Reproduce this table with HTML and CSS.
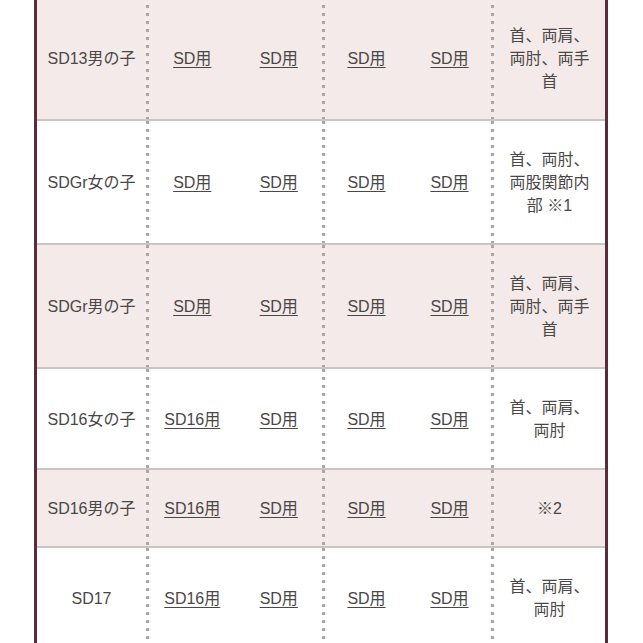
FILE: index.html
```html
<!DOCTYPE html>
<html lang="ja">
<head>
<meta charset="utf-8">
<title>SD table</title>
<link rel="stylesheet" href="styles.css">
</head>
<body>
<div class="table">
  <div class="row pink">
    <div class="cell name">SD13男の子</div>
    <div class="dots"></div>
    <div class="cell"><a href="#">SD用</a></div>
    <div class="cell"><a href="#">SD用</a></div>
    <div class="dots"></div>
    <div class="cell"><a href="#">SD用</a></div>
    <div class="cell"><a href="#">SD用</a></div>
    <div class="dots"></div>
    <div class="cell note">首、両肩、両肘、両手首</div>
  </div>
  <div class="row">
    <div class="cell name">SDGr女の子</div>
    <div class="dots"></div>
    <div class="cell"><a href="#">SD用</a></div>
    <div class="cell"><a href="#">SD用</a></div>
    <div class="dots"></div>
    <div class="cell"><a href="#">SD用</a></div>
    <div class="cell"><a href="#">SD用</a></div>
    <div class="dots"></div>
    <div class="cell note">首、両肘、両股関節内部 ※1</div>
  </div>
  <div class="row pink">
    <div class="cell name">SDGr男の子</div>
    <div class="dots"></div>
    <div class="cell"><a href="#">SD用</a></div>
    <div class="cell"><a href="#">SD用</a></div>
    <div class="dots"></div>
    <div class="cell"><a href="#">SD用</a></div>
    <div class="cell"><a href="#">SD用</a></div>
    <div class="dots"></div>
    <div class="cell note">首、両肩、両肘、両手首</div>
  </div>
  <div class="row">
    <div class="cell name">SD16女の子</div>
    <div class="dots"></div>
    <div class="cell"><a href="#">SD16用</a></div>
    <div class="cell"><a href="#">SD用</a></div>
    <div class="dots"></div>
    <div class="cell"><a href="#">SD用</a></div>
    <div class="cell"><a href="#">SD用</a></div>
    <div class="dots"></div>
    <div class="cell note">首、両肩、両肘</div>
  </div>
  <div class="row pink">
    <div class="cell name">SD16男の子</div>
    <div class="dots"></div>
    <div class="cell"><a href="#">SD16用</a></div>
    <div class="cell"><a href="#">SD用</a></div>
    <div class="dots"></div>
    <div class="cell"><a href="#">SD用</a></div>
    <div class="cell"><a href="#">SD用</a></div>
    <div class="dots"></div>
    <div class="cell note">※2</div>
  </div>
  <div class="row">
    <div class="cell name">SD17</div>
    <div class="dots"></div>
    <div class="cell"><a href="#">SD16用</a></div>
    <div class="cell"><a href="#">SD用</a></div>
    <div class="dots"></div>
    <div class="cell"><a href="#">SD用</a></div>
    <div class="cell"><a href="#">SD用</a></div>
    <div class="dots"></div>
    <div class="cell note">首、両肩、両肘</div>
  </div>
</div>
</body>
</html>
```
FILE: styles.css
```css
html, body {
  margin: 0;
  padding: 0;
  background: #ffffff;
}

body {
  font-family: "Liberation Sans", "Noto Sans CJK JP", sans-serif;
  font-size: 16px;
  color: #4a4747;
}

.table {
  margin: -3px 0 0 34px;
  width: 568px;
  border-left: 3px solid #5a2c3b;
  border-right: 3px solid #5a2c3b;
}

.row {
  display: grid;
  grid-template-columns: 109px 3px 86.5px 86.5px 3px 83px 83px 3px 111px;
  border-bottom: 2px solid #c9c5c5;
  background: #ffffff;
}

.row.pink {
  background: #f3eae9;
}

.cell {
  display: flex;
  align-items: center;
  justify-content: center;
  text-align: center;
  padding: 27px 0 26px;
  line-height: 23px;
}

.cell.note {
  padding-left: 10px;
  padding-right: 10px;
}

.cell a {
  color: #4a4747;
  text-decoration: underline;
  text-underline-offset: 3px;
}

.dots {
  background-image: linear-gradient(to bottom, #aba6a6 0, #aba6a6 3px, transparent 3px);
  background-size: 3px 8px;
  background-repeat: repeat-y;
}
```
